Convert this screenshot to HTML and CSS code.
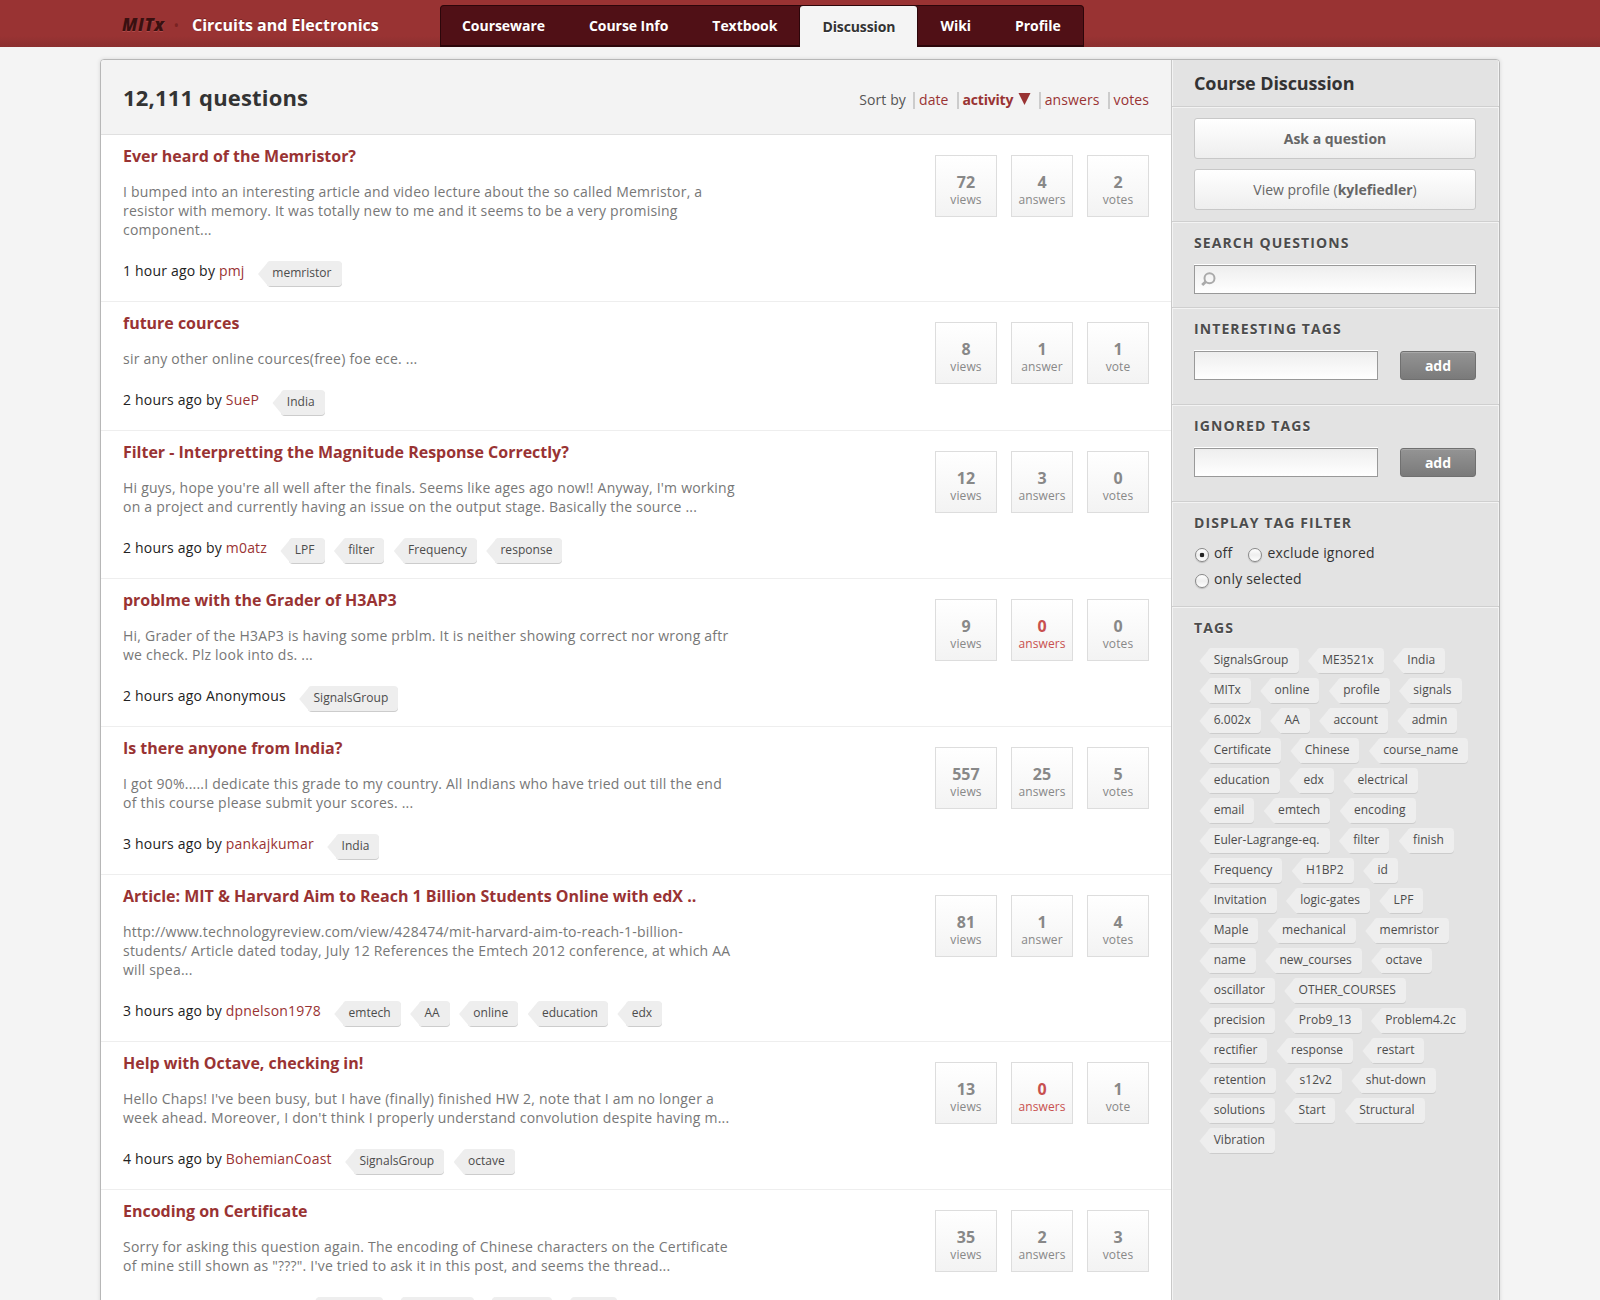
FILE: index.html
```html
<!DOCTYPE html>
<html lang="en">
<head>
<meta charset="utf-8">
<title>Course Discussion</title>
<link rel="stylesheet" href="styles.css">
</head>
<body>
<header class="site-header">
  <div class="header-inner">
    <div class="brand"><span class="logo">MITx</span><span class="dot">·</span><span class="course">Circuits and Electronics</span></div>
    <nav class="tabs">
      <a class="tab">Courseware</a><a class="tab">Course Info</a><a class="tab">Textbook</a><a class="tab active">Discussion</a><a class="tab">Wiki</a><a class="tab">Profile</a>
    </nav>
  </div>
</header>
<div class="container">
  <main class="main">
    <div class="list-header">
      <h1>12,111 questions</h1>
      <div class="sort"><span class="sort-label">Sort by</span><a>date</a><a class="on">activity <svg class="arrow" width="13" height="12" viewBox="0 0 13 12"><path d="M0.5 0H12.5L6.5 12Z" fill="#933"/></svg></a><a>answers</a><a>votes</a></div>
    </div>
    <article class="question">
      <div class="body"><h2>Ever heard of the Memristor?</h2>
      <p>I bumped into an interesting article and video lecture about the so called Memristor, a<br>resistor with memory. It was totally new to me and it seems to be a very promising<br>component...</p>
      <div class="meta"><span class="by">1 hour ago by <a>pmj</a></span><span class="tag">memristor</span></div></div>
      <div class="stats"><div class="stat"><b>72</b>views</div><div class="stat"><b>4</b>answers</div><div class="stat"><b>2</b>votes</div></div>
    </article>
    <article class="question">
      <div class="body"><h2>future cources</h2>
      <p>sir any other online cources(free) foe ece. ...</p>
      <div class="meta"><span class="by">2 hours ago by <a>SueP</a></span><span class="tag">India</span></div></div>
      <div class="stats"><div class="stat"><b>8</b>views</div><div class="stat"><b>1</b>answer</div><div class="stat"><b>1</b>vote</div></div>
    </article>
    <article class="question">
      <div class="body"><h2>Filter - Interpretting the Magnitude Response Correctly?</h2>
      <p>Hi guys, hope you're all well after the finals. Seems like ages ago now!! Anyway, I'm working<br>on a project and currently having an issue on the output stage. Basically the source ...</p>
      <div class="meta"><span class="by">2 hours ago by <a>m0atz</a></span><span class="tag">LPF</span><span class="tag">filter</span><span class="tag">Frequency</span><span class="tag">response</span></div></div>
      <div class="stats"><div class="stat"><b>12</b>views</div><div class="stat"><b>3</b>answers</div><div class="stat"><b>0</b>votes</div></div>
    </article>
    <article class="question">
      <div class="body"><h2>problme with the Grader of H3AP3</h2>
      <p>Hi, Grader of the H3AP3 is having some prblm. It is neither showing correct nor wrong aftr<br>we check. Plz look into ds. ...</p>
      <div class="meta"><span class="by">2 hours ago Anonymous</span><span class="tag">SignalsGroup</span></div></div>
      <div class="stats"><div class="stat"><b>9</b>views</div><div class="stat none"><b>0</b>answers</div><div class="stat"><b>0</b>votes</div></div>
    </article>
    <article class="question">
      <div class="body"><h2>Is there anyone from India?</h2>
      <p>I got 90%.....I dedicate this grade to my country. All Indians who have tried out till the end<br>of this course please submit your scores. ...</p>
      <div class="meta"><span class="by">3 hours ago by <a>pankajkumar</a></span><span class="tag">India</span></div></div>
      <div class="stats"><div class="stat"><b>557</b>views</div><div class="stat"><b>25</b>answers</div><div class="stat"><b>5</b>votes</div></div>
    </article>
    <article class="question">
      <div class="body"><h2>Article: MIT &amp; Harvard Aim to Reach 1 Billion Students Online with edX ..</h2>
      <p>http://www.technologyreview.com/view/428474/mit-harvard-aim-to-reach-1-billion-<br>students/ Article dated today, July 12 References the Emtech 2012 conference, at which AA<br>will spea...</p>
      <div class="meta"><span class="by">3 hours ago by <a>dpnelson1978</a></span><span class="tag">emtech</span><span class="tag">AA</span><span class="tag">online</span><span class="tag">education</span><span class="tag">edx</span></div></div>
      <div class="stats"><div class="stat"><b>81</b>views</div><div class="stat"><b>1</b>answer</div><div class="stat"><b>4</b>votes</div></div>
    </article>
    <article class="question">
      <div class="body"><h2>Help with Octave, checking in!</h2>
      <p>Hello Chaps! I've been busy, but I have (finally) finished HW 2, note that I am no longer a<br>week ahead. Moreover, I don't think I properly understand convolution despite having m...</p>
      <div class="meta"><span class="by">4 hours ago by <a>BohemianCoast</a></span><span class="tag">SignalsGroup</span><span class="tag">octave</span></div></div>
      <div class="stats"><div class="stat"><b>13</b>views</div><div class="stat none"><b>0</b>answers</div><div class="stat"><b>1</b>vote</div></div>
    </article>
    <article class="question">
      <div class="body"><h2>Encoding on Certificate</h2>
      <p>Sorry for asking this question again. The encoding of Chinese characters on the Certificate<br>of mine still shown as "???". I've tried to ask it in this post, and seems the thread...</p>
      <div class="meta"><span class="by">4 hours ago by <a>zhangwen</a></span><span class="tag">encoding</span><span class="tag">Certificate</span><span class="tag">Chinese</span><span class="tag">email</span></div></div>
      <div class="stats"><div class="stat"><b>35</b>views</div><div class="stat"><b>2</b>answers</div><div class="stat"><b>3</b>votes</div></div>
    </article>
  </main>
  <aside class="sidebar">
    <section class="side-title"><h2>Course Discussion</h2></section>
    <section class="side-actions">
      <a class="button"><b>Ask a question</b></a>
      <a class="button">View profile (<b>kylefiedler</b>)</a>
    </section>
    <section class="side-search">
      <h3>Search Questions</h3>
      <div class="field"><svg width="15" height="15" viewBox="0 0 15 15" fill="none" stroke="#aaa"><circle cx="8.5" cy="6.2" r="5" stroke-width="2"/><path d="M5 9.5L1.2 13" stroke-width="3"/></svg></div>
    </section>
    <section class="side-tagform">
      <h3>Interesting Tags</h3>
      <div class="row"><div class="field"></div><a class="add">add</a></div>
    </section>
    <section class="side-tagform">
      <h3>Ignored Tags</h3>
      <div class="row"><div class="field"></div><a class="add">add</a></div>
    </section>
    <section class="side-filter">
      <h3>Display Tag Filter</h3>
      <div class="radios"><label><i class="radio checked"></i>off</label><label><i class="radio"></i>exclude ignored</label></div>
      <div class="radios"><label><i class="radio"></i>only selected</label></div>
    </section>
    <section class="side-tags">
      <h3>Tags</h3>
      <div class="cloud">
        <div class="line"><span class="tag">SignalsGroup</span><span class="tag">ME3521x</span><span class="tag">India</span></div>
        <div class="line"><span class="tag">MITx</span><span class="tag">online</span><span class="tag">profile</span><span class="tag">signals</span></div>
        <div class="line"><span class="tag">6.002x</span><span class="tag">AA</span><span class="tag">account</span><span class="tag">admin</span></div>
        <div class="line"><span class="tag">Certificate</span><span class="tag">Chinese</span><span class="tag">course_name</span></div>
        <div class="line"><span class="tag">education</span><span class="tag">edx</span><span class="tag">electrical</span></div>
        <div class="line"><span class="tag">email</span><span class="tag">emtech</span><span class="tag">encoding</span></div>
        <div class="line"><span class="tag">Euler-Lagrange-eq.</span><span class="tag">filter</span><span class="tag">finish</span></div>
        <div class="line"><span class="tag">Frequency</span><span class="tag">H1BP2</span><span class="tag">id</span></div>
        <div class="line"><span class="tag">Invitation</span><span class="tag">logic-gates</span><span class="tag">LPF</span></div>
        <div class="line"><span class="tag">Maple</span><span class="tag">mechanical</span><span class="tag">memristor</span></div>
        <div class="line"><span class="tag">name</span><span class="tag">new_courses</span><span class="tag">octave</span></div>
        <div class="line"><span class="tag">oscillator</span><span class="tag">OTHER_COURSES</span></div>
        <div class="line"><span class="tag">precision</span><span class="tag">Prob9_13</span><span class="tag">Problem4.2c</span></div>
        <div class="line"><span class="tag">rectifier</span><span class="tag">response</span><span class="tag">restart</span></div>
        <div class="line"><span class="tag">retention</span><span class="tag">s12v2</span><span class="tag">shut-down</span></div>
        <div class="line"><span class="tag">solutions</span><span class="tag">Start</span><span class="tag">Structural</span></div>
        <div class="line"><span class="tag">Vibration</span></div>
      </div>
    </section>
  </aside>
</div>
</body>
</html>
```
FILE: styles.css
```css
* { box-sizing: border-box; }
html, body { margin: 0; height: 1300px; overflow: hidden; }
body { background: #f4f4f4; color: #333; font: 14px/19px "Open Sans", sans-serif; }
h1, h2, h3, p { margin: 0; }

.site-header { height: 47px; background: linear-gradient(#933, #933 36px, #8b2f2f 47px); }
.header-inner { width: 1400px; margin: 0 auto; padding-left: 22px; display: flex; height: 47px; }
.brand { width: 318px; display: flex; padding-top: 14px; line-height: 22px; color: #fff; font-size: 16px; font-weight: 700; text-shadow: 0 -1px 0 #722; white-space: nowrap; }
.logo { width: 52px; color: #3a1010; font-style: italic; font-weight: 800; font-size: 17px; letter-spacing: .5px; text-shadow: 0 1px 0 #b04a4a; }
.dot { width: 18px; color: #7a2222; }
.tabs { display: flex; height: 42px; margin-top: 5px; background: #501016; border: 1px solid #2c060a; border-bottom: 2px solid #2c060a; border-radius: 4px 4px 0 0; }
.tab { padding: 10px 22px 0; font-weight: 700; line-height: 19px; color: #fff; letter-spacing: -.05px; }
.tab:first-child { padding-left: 21px; }
.tab.active { background: #f4f4f4; color: #333; height: 41px; margin: 0 1px; padding-top: 11px; border-radius: 3px 3px 0 0; text-shadow: 0 1px 0 #fff; box-shadow: 1px 0 0 #2c060a, -1px 0 0 #2c060a; letter-spacing: -.1px; }

.container { width: 1400px; height: 1260px; margin: 12px auto 0; display: flex; border: 1px solid #b7b7b7; border-radius: 4px 4px 0 0; box-shadow: 0 0 4px rgba(0,0,0,.12); background: #fff; overflow: hidden; }
.main { width: 1070px; flex: none; }
.list-header { height: 75px; background: #f3f3f3; border-bottom: 1px solid #e0e0e0; padding: 0 22px; display: flex; justify-content: space-between; }
h1 { font-size: 22px; line-height: 30px; font-weight: 700; letter-spacing: .17px; color: #333; padding-top: 22px; }
.sort { display: flex; padding-top: 32px; line-height: 15px; height: 49px; color: #555; letter-spacing: .1px; }
.sort a { color: #933; border-left: 2px solid #ccc; padding-left: 4px; margin-left: 8px; }
.sort a:nth-child(2) { margin-left: 7px; }
.sort .on { font-weight: 700; letter-spacing: -.2px; }
.arrow { margin: 0 0 0 1px; }

.question { display: flex; justify-content: space-between; padding: 11px 22px 14px; border-bottom: 1px solid #eee; }
.question h2 { font-size: 16px; line-height: 20px; font-weight: 700; color: #933; white-space: nowrap; letter-spacing: -.02px; }
.question p { margin-top: 16px; color: #777; white-space: nowrap; letter-spacing: .22px; }
.meta { margin-top: 22px; height: 26px; display: flex; }
.by { line-height: 20px; color: #222; white-space: nowrap; margin-right: 4px; letter-spacing: .19px; }
.by a { color: #933; }
.stats { display: flex; gap: 14px; padding-top: 9px; }
.stat { width: 62px; height: 62px; border: 1px solid #ddd; background: linear-gradient(#fff, #f3f3f3); text-align: center; font-size: 12px; line-height: 16px; color: #888; padding-top: 17px; letter-spacing: .1px; }
.stat b { display: block; font-size: 16px; line-height: 19px; color: #888; }
.stat.none, .stat.none b { color: #c8504f; }

.tag { position: relative; margin-left: 18.4px; height: 25px; padding: 0 10px 0 5.3px; background: #eee; border-radius: 4px; box-shadow: 0 1px 0 #ccc; font-size: 12px; line-height: 24px; color: #4c4c4c; white-space: nowrap; letter-spacing: .03px; }
.tag::before { content: ""; position: absolute; left: -9px; top: 0; width: 12px; height: 25px; background: #eee; clip-path: polygon(100% 0, 10px 1px, 0 13px, 10px 25px, 100% 100%); }

.sidebar { width: 328px; background: #e3e3e3; border-left: 1px solid #c8c8c8; box-shadow: inset 1px 0 0 #f3f3f3, inset -1px 0 0 #f3f3f3; }
.sidebar section { padding: 0 23px 0 22px; border-bottom: 1px solid #cfcfcf; box-shadow: 0 1px 0 #f3f3f3; }
.side-title { height: 47px; }
.side-title h2 { font-size: 18px; line-height: 24px; font-weight: 700; letter-spacing: -.1px; padding-top: 11px; }
.side-actions { height: 115px; }
.sidebar .side-actions { padding-top: 11px; display: flex; flex-direction: column; gap: 10px; }
.button { height: 41px; border: 1px solid #c8c8c8; border-radius: 3px; background: linear-gradient(#fff, #eee); text-align: center; line-height: 39px; color: #666; }
.button b { font-weight: 700; }
h3 { text-transform: uppercase; font-size: 14px; line-height: 20px; font-weight: 700; color: #4c4c4c; letter-spacing: 1.1px; text-shadow: 0 1px 0 #f3f3f3; padding-top: 11px; }
.side-search { height: 86px; }
.field { height: 29px; border: 1px solid #999; background: linear-gradient(#eee, #fff); box-shadow: 0 -1px 0 #fff; }
.side-search .field { margin-top: 12px; padding: 6px 0 0 6px; }
.side-search svg { display: block; }
.side-tagform { height: 97px; }
.row { display: flex; gap: 22px; margin-top: 12px; }
.row .field { width: 184px; flex: none; }
.add { width: 76px; flex: none; height: 29px; border: 1px solid #707070; border-radius: 3px; background: linear-gradient(#949494, #7a7a7a); box-shadow: inset 0 1px 0 #a8a8a8; text-align: center; color: #fff; font-weight: 700; line-height: 27px; }
.side-filter { height: 105px; }
.radios { display: flex; gap: 15px; height: 26px; color: #333; line-height: 20px; letter-spacing: .2px; }
h3 + .radios { margin-top: 10px; }
.radios label { display: flex; }
.radio { width: 14px; height: 14px; margin: 5px 5px 0 1px; border: 1px solid #888; border-radius: 50%; background: linear-gradient(#fff, #eee 50%, #fff); box-shadow: 0 1px 1px #bbb; }
.radio.checked { background: radial-gradient(circle, #222 0 2px, transparent 2.6px), linear-gradient(#fff, #eee 50%, #fff); }
.sidebar .side-tags { border: 0; box-shadow: none; }
.cloud { margin: 10px 0 0 -4px; display: flex; flex-direction: column; gap: 5px; }
.line { display: flex; }
```
